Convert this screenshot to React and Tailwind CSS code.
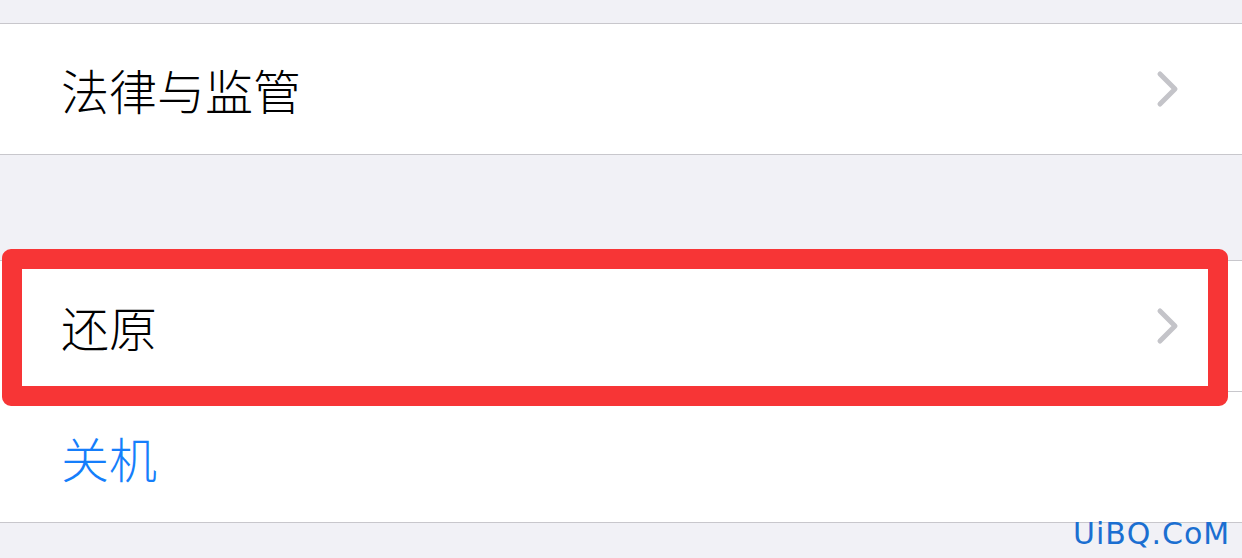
import React from 'react';

function Chevron() {
  return (
    <svg width="24" height="38" viewBox="0 0 24 38" className="shrink-0">
      <path d="M4 4 L19 19 L4 34" fill="none" stroke="#c4c4c9" strokeWidth="5" strokeLinecap="round" strokeLinejoin="round" />
    </svg>
  );
}

function Row({ label, blue, chevron }) {
  return (
    <div className="h-[130px] flex items-center pl-[61px] pr-[62px] bg-white">
      <span className={`flex-1 text-[48px] leading-none font-light ${blue ? 'text-[#157efb]' : 'text-black'}`}>{label}</span>
      {chevron && <Chevron />}
    </div>
  );
}

export default function App() {
  return (
    <div
      className="relative w-[1242px] h-[558px] overflow-hidden bg-[#f1f1f6]"
      style={{ fontFamily: '"Noto Sans CJK SC", "Noto Sans", sans-serif' }}
    >
      <div className="h-[23px]" />
      <div className="border-y border-[#c8c7cc]">
        <Row label="法律与监管" chevron />
      </div>
      <div className="h-[105px]" />
      <div className="border-y border-[#c8c7cc] bg-white">
        <Row label="还原" chevron />
        <div className="ml-[62px] h-px bg-[#c8c7cc]" />
        <Row label="关机" blue />
      </div>

      {/* red highlight annotation */}
      <div className="absolute left-[2px] top-[249px] w-[1226px] h-[157px] border-[20px] border-[#f73536] rounded-[9px]" />

      {/* watermark */}
      <div
        className="absolute left-[1073px] top-[519px] text-[30px] leading-none text-[#1b6fd1] tracking-[1px]"
        style={{ fontFamily: '"DejaVu Sans", sans-serif' }}
      >
        UiBQ.CoM
      </div>
    </div>
  );
}
